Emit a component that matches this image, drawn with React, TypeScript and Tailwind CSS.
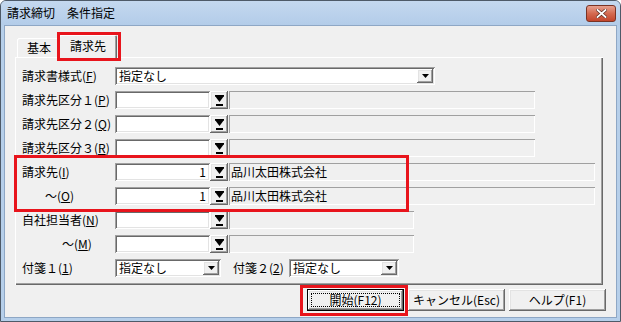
import React from "react";

const sunken =
  "shadow-[inset_1px_1px_0_#a0a0a0,inset_-1px_-1px_0_#ffffff,inset_2px_2px_0_#696969,inset_-2px_-2px_0_#e3e3e3]";
const raised =
  "shadow-[inset_-1px_-1px_0_#696969,inset_1px_1px_0_#ffffff,inset_-2px_-2px_0_#a0a0a0,inset_2px_2px_0_#e3e3e3]";
const flatSunken = "shadow-[inset_1px_1px_0_#a0a0a0,inset_-1px_-1px_0_#ffffff]";

function Arrow() {
  return (
    <svg width="7" height="4" viewBox="0 0 7 4">
      <polygon points="0,0 7,0 3.5,4" fill="#000" />
    </svg>
  );
}

function FilterIcon() {
  return (
    <svg width="9" height="11" viewBox="0 0 9 11">
      <rect x="0" y="0" width="9" height="1.5" fill="#000" />
      <polygon points="0,1 9,1 4.5,7" fill="#000" />
      <rect x="1" y="9" width="7" height="2" fill="#000" />
    </svg>
  );
}

function Label({ children, cls = "" }: { children: React.ReactNode; cls?: string }) {
  return <div className={`w-[93px] shrink-0 leading-[18px] whitespace-nowrap ${cls}`}>{children}</div>;
}

function Combo({ w, text }: { w: string; text: string }) {
  return (
    <div className={`${w} h-[18px] bg-white ${sunken} flex items-center`}>
      <span className="flex-1 pl-[4px] leading-[18px] whitespace-nowrap">{text}</span>
      <div className={`w-[16px] h-[14px] mr-[2px] bg-[#f0f0f0] ${raised} flex items-center justify-center`}>
        <Arrow />
      </div>
    </div>
  );
}

function RefField({ value, dispW, disp }: { value?: string; dispW: string; disp?: string }) {
  return (
    <div className="flex items-center">
      <div className={`w-[95px] h-[18px] bg-white ${sunken} flex items-center justify-end pr-[4px] leading-[18px]`}>
        {value}
      </div>
      <div className={`w-[18px] h-[18px] bg-[#f0f0f0] ${raised} flex items-center justify-center`}>
        <FilterIcon />
      </div>
      <div className={`${dispW} h-[18px] ml-[1px] ${flatSunken} pl-[2px] leading-[18px] whitespace-nowrap`}>
        {disp}
      </div>
    </div>
  );
}

function Row({ children }: { children: React.ReactNode }) {
  return <div className="flex items-center h-[18px]">{children}</div>;
}

function Btn({ children, def = false }: { children: React.ReactNode; def?: boolean }) {
  if (def) {
    return (
      <div className="w-[97px] h-[22px] border border-black bg-[#f0f0f0]">
        <div className={`w-full h-full ${raised} p-[3px]`}>
          <div className="w-full h-full border border-dotted border-black flex items-center justify-center leading-none">
            {children}
          </div>
        </div>
      </div>
    );
  }
  return (
    <div className={`w-[97px] h-[22px] bg-[#f0f0f0] ${raised} flex items-center justify-center leading-none`}>
      {children}
    </div>
  );
}

function CloseBtn() {
  return (
    <div className="w-[30px] h-[17px] rounded-[3px] border border-[#7a3324] bg-gradient-to-b from-[#e6a08f] via-[#d46a50] to-[#c2452c] flex items-center justify-center">
      <svg width="11" height="9" viewBox="0 0 11 9">
        <path d="M1.5 1 L9.5 8 M9.5 1 L1.5 8" stroke="#5a2a20" strokeWidth="3.2" strokeLinecap="square" />
        <path d="M1.5 1 L9.5 8 M9.5 1 L1.5 8" stroke="#ffffff" strokeWidth="1.8" strokeLinecap="square" />
      </svg>
    </div>
  );
}

export default function App() {
  return (
    <div className="relative w-[621px] h-[322px] overflow-hidden bg-white font-['Noto_Sans_CJK_JP','Noto_Sans',sans-serif] text-[12px] text-black">
      <div className="w-full h-full flex flex-col border border-[#4e5a68] rounded-t-[6px] bg-[#b6cfea]">
        <div className="h-[24px] shrink-0 flex items-center justify-between pl-[6px] pr-[4px] rounded-t-[5px] bg-gradient-to-b from-[#c4d8ef] to-[#b3cce9]">
          <span className="leading-none">請求締切　条件指定</span>
          <CloseBtn />
        </div>
        <div className="flex-1 mx-[3px] mb-[3px] border border-[#8ea7c5] bg-[#f0f0f0] flex flex-col">
          {/* tabs */}
          <div className="relative z-10 mt-[9px] -mb-[1px] ml-[12px] h-[23px] flex items-end">
            <div className="w-[44px] h-[19px] mb-[1px] rounded-t-[2px] bg-[#f0f0f0] shadow-[inset_1px_1px_0_#ffffff,inset_-1px_0_0_#696969,inset_-2px_0_0_#a0a0a0] flex items-center justify-center leading-none">
              基本
            </div>
            <div className="-ml-[2px] w-[58px] h-[23px] rounded-t-[2px] bg-[#f0f0f0] shadow-[inset_1px_1px_0_#ffffff,inset_-1px_0_0_#696969,inset_-2px_0_0_#a0a0a0] flex items-center justify-center leading-none pb-[1px]">
              請求先
            </div>
          </div>
          {/* panel */}
          <div className="ml-[10px] w-[588px] h-[228px] shrink-0 bg-[#f0f0f0] shadow-[inset_1px_1px_0_#ffffff,inset_-1px_-1px_0_#696969,inset_-2px_-2px_0_#a0a0a0] pt-[10px] pl-[7px] flex flex-col gap-[6px]">
            <Row>
              <Label>請求書様式(<u>F</u>)</Label>
              <Combo w="w-[320px]" text="指定なし" />
            </Row>
            <Row>
              <Label>請求先区分１(<u>P</u>)</Label>
              <RefField dispW="w-[306px]" />
            </Row>
            <Row>
              <Label>請求先区分２(<u>Q</u>)</Label>
              <RefField dispW="w-[306px]" />
            </Row>
            <Row>
              <Label>請求先区分３(<u>R</u>)</Label>
              <RefField dispW="w-[306px]" />
            </Row>
            <Row>
              <Label>請求先(<u>I</u>)</Label>
              <RefField value="1" dispW="w-[366px]" disp="品川太田株式会社" />
            </Row>
            <Row>
              <Label cls="pl-[23px]">～(<u>O</u>)</Label>
              <RefField value="1" dispW="w-[366px]" disp="品川太田株式会社" />
            </Row>
            <Row>
              <Label>自社担当者(<u>N</u>)</Label>
              <RefField dispW="w-[185px]" />
            </Row>
            <Row>
              <Label cls="pl-[40px]">～(<u>M</u>)</Label>
              <RefField dispW="w-[185px]" />
            </Row>
            <Row>
              <Label>付箋１(<u>1</u>)</Label>
              <Combo w="w-[106px]" text="指定なし" />
              <div className="ml-[12px] w-[56px] leading-[18px] whitespace-nowrap">
                付箋２(<u>2</u>)
              </div>
              <Combo w="w-[110px]" text="指定なし" />
            </Row>
          </div>
          {/* buttons */}
          <div className="flex justify-end gap-[4px] mt-[4px] mr-[10px]">
            <Btn def>開始(F12)</Btn>
            <Btn>キャンセル(Esc)</Btn>
            <Btn>ヘルプ(F1)</Btn>
          </div>
        </div>
      </div>
      {/* red highlight boxes */}
      <div className="absolute left-[57px] top-[32px] w-[64px] h-[29px] border-[3px] border-[#e8141c] z-20" />
      <div className="absolute left-[14px] top-[155px] w-[395px] h-[57px] border-[3px] border-[#e8141c] z-20" />
      <div className="absolute left-[300px] top-[285px] w-[108px] h-[31px] border-[3px] border-[#e8141c] z-20" />
    </div>
  );
}
